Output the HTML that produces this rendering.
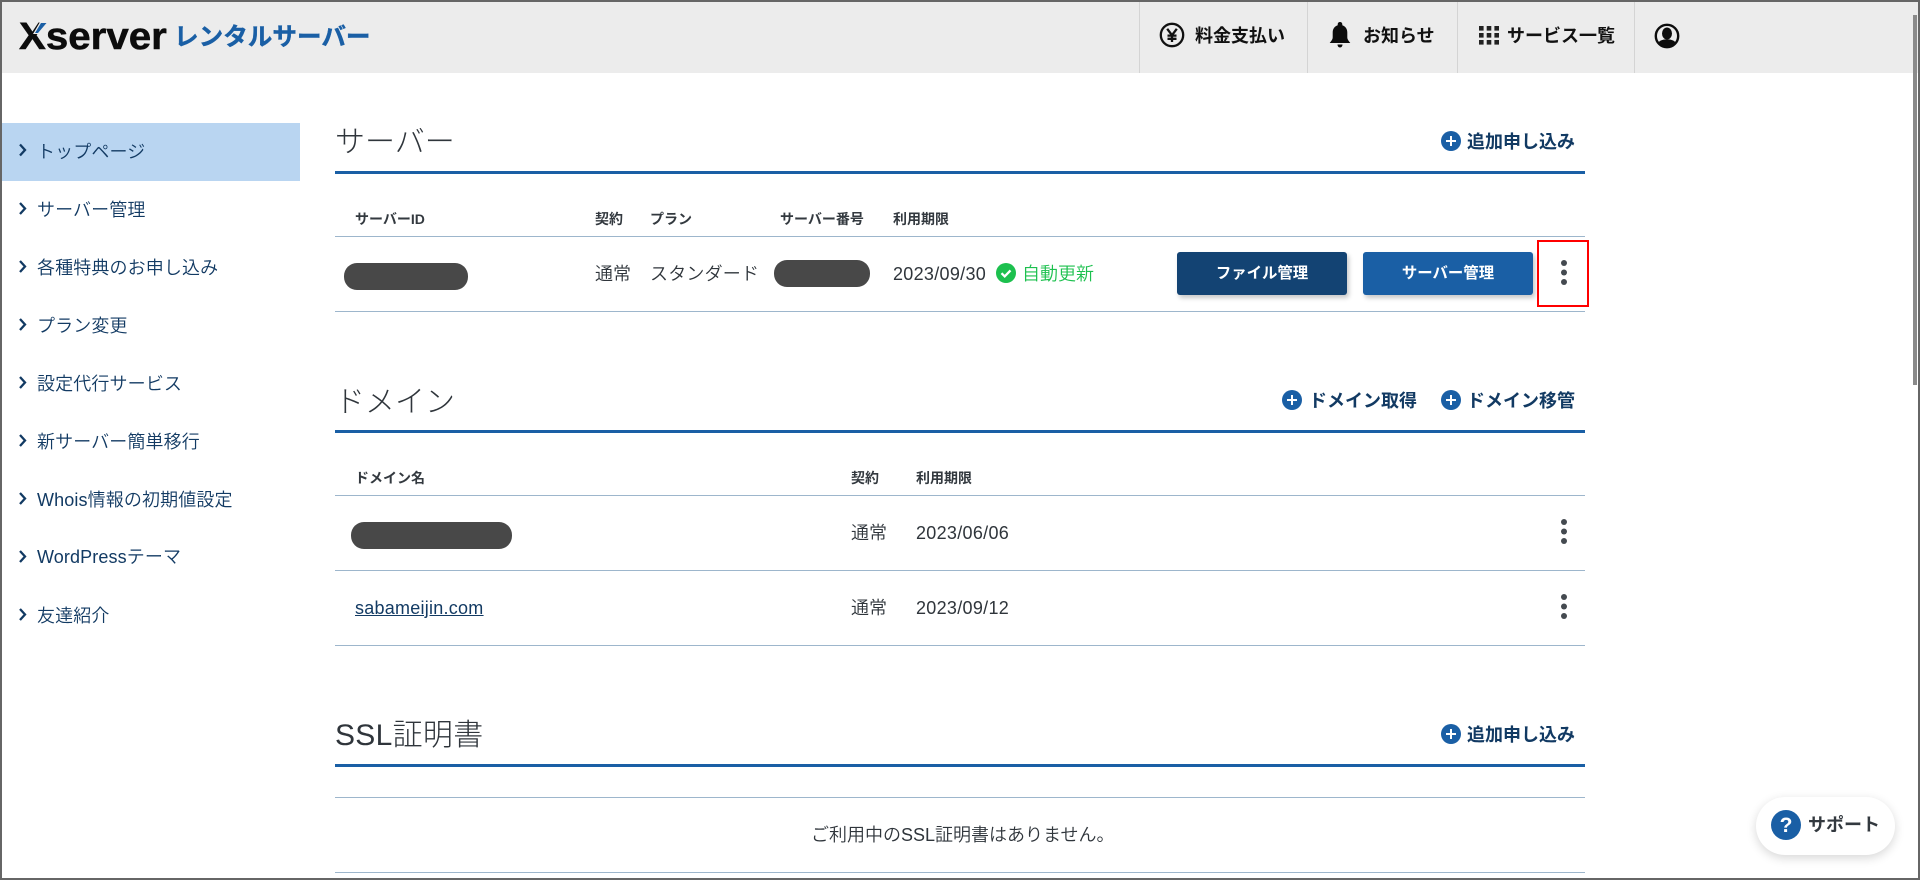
<!DOCTYPE html>
<html lang="ja"><head><meta charset="utf-8"><title>Xserver</title>
<style>
html,body{margin:0;padding:0;background:#fff;overflow:hidden}
#p{position:relative;width:1920px;height:880px;overflow:hidden;background:#fff;font-family:"Liberation Sans","Noto Sans CJK JP",sans-serif;color:#33393f}
.a{position:absolute}
.t{position:absolute;white-space:nowrap;line-height:1}
.b{font-weight:700}
.l{position:absolute;left:335px;width:1250px;height:1px;background:#9db6cc}
.h{position:absolute;left:335px;width:1250px;height:3px;background:#1a5fa5}
.nav{position:absolute;left:37px;font-size:18px;line-height:18px;color:#123a63;white-space:nowrap;font-weight:350;letter-spacing:.12px}
.th{font-size:14px;font-weight:700;color:#33393f}
.td{font-size:18px;color:#2f353b;font-weight:350}
.dt{letter-spacing:.3px}
.ti{font-size:30px;color:#2f353b;font-weight:300}
.add{font-size:18px;font-weight:700;color:#123a63}
.hd{font-size:18px;font-weight:700;color:#111}
.sep{position:absolute;top:2px;width:1px;height:71px;background:#d4d4d4}
.r{position:absolute;background:#484848;border-radius:13px;height:27px}
.btn{position:absolute;top:252px;width:170px;height:43px;border-radius:3px;color:#fff;font-size:15.4px;font-weight:700;line-height:43px;text-align:center;box-shadow:2px 3px 5px rgba(0,0,0,.22)}
svg{position:absolute;display:block}
</style></head><body><div id="p">

<div class="a" style="left:0;top:0;width:1920px;height:73px;background:#ececec"></div>

<!-- logo -->
<div class="t b" style="left:19px;top:18px;font-size:38px;line-height:38px;color:#0c0c0c;-webkit-text-stroke:.5px #0c0c0c;transform:scaleX(1.06);transform-origin:0 0">Xserver</div>
<svg style="left:32px;top:22px" width="16" height="13" viewBox="0 0 16 13"><polygon points="8,0 16,0 6,12 1,12" fill="#ececec"/><polygon points="9,1 14.500,1 6,11 3,11" fill="#1a5fa5"/></svg>
<div class="t b" style="left:174px;top:26px;font-size:24.600px;color:#1a5fa5;-webkit-text-stroke:.4px #1a5fa5">レンタルサーバー</div>

<!-- header -->
<div class="sep" style="left:1139px"></div>
<div class="sep" style="left:1307px"></div>
<div class="sep" style="left:1457px"></div>
<div class="sep" style="left:1634px"></div>

<svg style="left:1159px;top:22px" width="26" height="26" viewBox="0 0 26 26"><circle cx="13" cy="13" r="11.200" fill="none" stroke="#111" stroke-width="2.300"/><path d="M8.200 6.800L13 13.200L17.800 6.800M13 13.200V20M8.500 13.600H17.500M8.500 16.800H17.500" fill="none" stroke="#111" stroke-width="2.300"/></svg>
<div class="t hd" style="left:1195px;top:27px">料金支払い</div>

<svg style="left:1329px;top:21px" width="22" height="28" viewBox="0 0 22 28"><path d="M11 1c1.400 0 2.300 1 2.300 2.300v1c3.300 1 5 3.800 5 7.200v4.700c0 2.300 1.500 3.700 3 5.800H.7c1.500-2.100 3-3.500 3-5.800v-4.700c0-3.400 1.700-6.200 5-7.200v-1C8.700 2 9.600 1 11 1z" fill="#0c0c0c"/><path d="M8.500 23.500h5c0 1.600-1 3-2.500 3s-2.500-1.400-2.500-3z" fill="#0c0c0c"/></svg>
<div class="t hd" style="left:1363px;top:27px">お知らせ</div>

<svg style="left:1479px;top:26px" width="20" height="19" viewBox="0 0 20 19" fill="#222"><rect x="0" y="0" width="4.600" height="4.600"/><rect x="7.700" y="0" width="4.600" height="4.600"/><rect x="15.400" y="0" width="4.600" height="4.600"/><rect x="0" y="7" width="4.600" height="4.600"/><rect x="7.700" y="7" width="4.600" height="4.600"/><rect x="15.400" y="7" width="4.600" height="4.600"/><rect x="0" y="14" width="4.600" height="4.600"/><rect x="7.700" y="14" width="4.600" height="4.600"/><rect x="15.400" y="14" width="4.600" height="4.600"/></svg>
<div class="t hd" style="left:1507px;top:27px">サービス一覧</div>

<svg style="left:1654px;top:23px" width="26" height="26" viewBox="0 0 26 26"><defs><clipPath id="uc"><circle cx="13" cy="13" r="10.500"/></clipPath></defs><circle cx="13" cy="13" r="11.200" fill="#ececec" stroke="#0c0c0c" stroke-width="2.400"/><g clip-path="url(#uc)" fill="#0c0c0c"><ellipse cx="13" cy="10.500" rx="5" ry="6"/><path d="M2 26c0-6 3.500-8.500 8-9.500h6c4.500 1 8 3.500 8 9.500z"/></g></svg>

<!-- sidebar -->
<div class="a" style="left:0;top:123px;width:300px;height:58px;background:#b9d5f1"></div>
<svg style="left:0;top:0;width:40px;height:640px" viewBox="0 0 40 640"><g fill="none" stroke="#123a63" stroke-width="2.300"><path d="M20 144.500l5 5.500l-5 5.500"/><path d="M20 203l5 5.500l-5 5.500"/><path d="M20 261l5 5.500l-5 5.500"/><path d="M20 319l5 5.500l-5 5.500"/><path d="M20 377l5 5.500l-5 5.500"/><path d="M20 435l5 5.500l-5 5.500"/><path d="M20 493l5 5.500l-5 5.500"/><path d="M20 551l5 5.500l-5 5.500"/><path d="M20 609l5 5.500l-5 5.500"/></g></svg>
<div class="nav" style="top:143px">トップページ</div>
<div class="nav" style="top:201px">サーバー管理</div>
<div class="nav" style="top:259px">各種特典のお申し込み</div>
<div class="nav" style="top:317px">プラン変更</div>
<div class="nav" style="top:375px">設定代行サービス</div>
<div class="nav" style="top:433px">新サーバー簡単移行</div>
<div class="nav" style="top:491px">Whois情報の初期値設定</div>
<div class="nav" style="top:548px">WordPressテーマ</div>
<div class="nav" style="top:607px">友達紹介</div>

<!-- server section -->
<div class="t ti" style="left:335px;top:128px">サーバー</div>
<svg style="left:1441px;top:131px" width="20" height="20" viewBox="0 0 20 20"><circle cx="10" cy="10" r="10" fill="#1a5fa5"/><path d="M5 10H15M10 5V15" stroke="#fff" stroke-width="2"/></svg>
<div class="t add" style="left:1467px;top:133px">追加申し込み</div>
<div class="h" style="top:171px"></div>
<div class="t th" style="left:355px;top:212px">サーバーID</div>
<div class="t th" style="left:595px;top:212px">契約</div>
<div class="t th" style="left:650px;top:212px">プラン</div>
<div class="t th" style="left:780px;top:212px">サーバー番号</div>
<div class="t th" style="left:893px;top:212px">利用期限</div>
<div class="l" style="top:236px"></div>
<div class="r" style="left:344px;top:263px;width:124px"></div>
<div class="t td" style="left:595px;top:265px">通常</div>
<div class="t td" style="left:650px;top:265px;letter-spacing:.2px">スタンダード</div>
<div class="r" style="left:774px;top:260px;width:96px"></div>
<div class="t td dt" style="left:893px;top:265px">2023/09/30</div>
<svg style="left:996px;top:263px" width="20" height="20" viewBox="0 0 20 20"><circle cx="10" cy="10" r="10" fill="#1cc04e"/><path d="M5.500 10.200l3.200 3.200l5.800-6" fill="none" stroke="#fff" stroke-width="2.300"/></svg>
<div class="t" style="left:1022px;top:265px;font-size:18px;color:#1cc04e;font-weight:350">自動更新</div>
<div class="btn" style="left:1177px;background:#134373">ファイル管理</div>
<div class="btn" style="left:1363px;background:#1a5fa5">サーバー管理</div>
<div class="a" style="left:1537px;top:240px;width:48px;height:63px;border:2px solid #f00;background:#fff"></div>
<svg style="left:1560px;top:258px" width="8" height="30" viewBox="0 0 8 30" fill="#444a50"><circle cx="4" cy="5" r="3"/><circle cx="4" cy="14.500" r="3"/><circle cx="4" cy="24" r="3"/></svg>
<div class="l" style="top:311px"></div>

<!-- domain section -->
<div class="t ti" style="left:335px;top:388px">ドメイン</div>
<svg style="left:1282px;top:390px" width="20" height="20" viewBox="0 0 20 20"><circle cx="10" cy="10" r="10" fill="#1a5fa5"/><path d="M5 10H15M10 5V15" stroke="#fff" stroke-width="2"/></svg>
<div class="t add" style="left:1309px;top:392px">ドメイン取得</div>
<svg style="left:1441px;top:390px" width="20" height="20" viewBox="0 0 20 20"><circle cx="10" cy="10" r="10" fill="#1a5fa5"/><path d="M5 10H15M10 5V15" stroke="#fff" stroke-width="2"/></svg>
<div class="t add" style="left:1467px;top:392px">ドメイン移管</div>
<div class="h" style="top:430px"></div>
<div class="t th" style="left:355px;top:471px">ドメイン名</div>
<div class="t th" style="left:851px;top:471px">契約</div>
<div class="t th" style="left:916px;top:471px">利用期限</div>
<div class="l" style="top:495px"></div>
<div class="r" style="left:351px;top:522px;width:161px"></div>
<div class="t td" style="left:851px;top:524px">通常</div>
<div class="t td dt" style="left:916px;top:524px">2023/06/06</div>
<svg style="left:1560px;top:517px" width="8" height="30" viewBox="0 0 8 30" fill="#444a50"><circle cx="4" cy="5" r="3"/><circle cx="4" cy="14.500" r="3"/><circle cx="4" cy="24" r="3"/></svg>
<div class="l" style="top:570px"></div>
<div class="t" style="left:355px;top:599px;font-size:18px;color:#123a63;text-decoration:underline;letter-spacing:.25px">sabameijin.com</div>
<div class="t td" style="left:851px;top:599px">通常</div>
<div class="t td dt" style="left:916px;top:599px">2023/09/12</div>
<svg style="left:1560px;top:592px" width="8" height="30" viewBox="0 0 8 30" fill="#444a50"><circle cx="4" cy="5" r="3"/><circle cx="4" cy="14.500" r="3"/><circle cx="4" cy="24" r="3"/></svg>
<div class="l" style="top:645px"></div>

<!-- ssl section -->
<div class="t ti" style="left:335px;top:721px;letter-spacing:.3px">SSL証明書</div>
<svg style="left:1441px;top:724px" width="20" height="20" viewBox="0 0 20 20"><circle cx="10" cy="10" r="10" fill="#1a5fa5"/><path d="M5 10H15M10 5V15" stroke="#fff" stroke-width="2"/></svg>
<div class="t add" style="left:1467px;top:726px">追加申し込み</div>
<div class="h" style="top:764px"></div>
<div class="l" style="top:797px"></div>
<div class="t td" style="left:811px;top:826px">ご利用中のSSL証明書はありません。</div>
<div class="l" style="top:872px"></div>

<!-- support -->
<div class="a" style="left:1756px;top:797px;width:139px;height:58px;border-radius:29px;background:#fff;box-shadow:0 3px 10px rgba(0,0,0,.16)"></div>
<svg style="left:1771px;top:810px" width="30" height="30" viewBox="0 0 30 30"><circle cx="15" cy="15" r="15" fill="#1a5fa5"/><text x="15" y="22" text-anchor="middle" font-family="Liberation Sans" font-weight="700" font-size="21" fill="#fff">?</text></svg>
<div class="t b" style="left:1808px;top:816px;font-size:18px;color:#33393f">サポート</div>

<!-- scrollbar + window frame -->
<div class="a" style="left:1913px;top:15px;width:4px;height:370px;background:#8a8a8a"></div>
<div class="a" style="left:0;top:0;width:1916px;height:876px;border:2px solid #666"></div>
</div></body></html>
